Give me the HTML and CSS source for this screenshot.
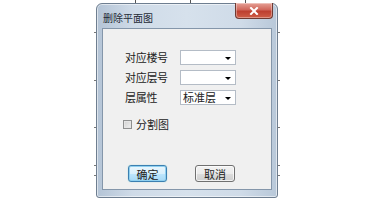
FILE: index.html
```html
<!DOCTYPE html>
<html lang="zh">
<head>
<meta charset="utf-8">
<title>删除平面图</title>
<link rel="stylesheet" href="styles.css">
</head>
<body>
<div class="stage">
  <div class="dialog">
    <div class="titlebar">
      <span class="title">删除平面图</span>
      <div class="close">
        <svg width="10" height="8" viewBox="0 0 10 8"><path d="M2 1 L8 7 M8 1 L2 7" stroke="#fff" stroke-width="2" stroke-linecap="square"/></svg>
      </div>
    </div>
    <div class="client">
      <div class="form">
        <span class="label">对应楼号</span>
        <div class="combo"><span class="value"></span><span class="arrow"></span></div>
        <span class="label">对应层号</span>
        <div class="combo"><span class="value"></span><span class="arrow"></span></div>
        <span class="label">层属性</span>
        <div class="combo"><span class="value">标准层</span><span class="arrow"></span></div>
      </div>
      <label class="check"><span class="box"></span><span>分割图</span></label>
      <div class="buttons">
        <button class="btn primary">确定</button>
        <button class="btn">取消</button>
      </div>
    </div>
  </div>
</div>
</body>
</html>
```
FILE: styles.css
```css
html, body {
  margin: 0;
  padding: 0;
  background: #ffffff;
}
body {
  width: 375px;
  height: 200px;
  overflow: hidden;
  font-family: "Noto Sans CJK SC", "Noto Sans", sans-serif;
  font-size: 11px;
  color: #222;
}
.stage {
  margin-left: 94px;
  width: 186px;
  height: 200px;
  box-sizing: border-box;
  padding: 3px 2px 2px 2px;
  background:
    linear-gradient(#555, #555) 41px 0 / 1px 4px no-repeat,
    linear-gradient(#555, #555) 96px 0 / 1px 4px no-repeat,
    linear-gradient(#555, #555) 151px 0 / 1px 4px no-repeat,
    linear-gradient(#777, #777) 0 32px / 186px 1px no-repeat,
    linear-gradient(#777, #777) 0 80px / 186px 1px no-repeat,
    linear-gradient(#777, #777) 0 127px / 186px 1px no-repeat,
    linear-gradient(#777, #777) 0 165px / 186px 1px no-repeat,
    linear-gradient(#777, #777) 0 175px / 186px 1px no-repeat,
    #fff;
}
.dialog {
  height: 195px;
  box-sizing: border-box;
  border: 1px solid #6e7e90;
  border-radius: 6px 6px 3px 3px;
  background: linear-gradient(90deg, #b4c4d6 0%, #cfdbe8 20%, #d6e1ec 50%, #cfdbe8 80%, #b8c8d9 100%);
  box-shadow: inset 0 0 0 1px rgba(255,255,255,0.55);
  display: flex;
  flex-direction: column;
  padding: 0 5px 7px 5px;
}
.titlebar {
  height: 24px;
  display: flex;
  align-items: flex-start;
  justify-content: space-between;
}
.title {
  font-size: 10px;
  color: #1e2a36;
  margin-top: 8px;
  padding-left: 1px;
  line-height: 12px;
}
.close {
  width: 38px;
  height: 16px;
  margin-top: -1px;
  margin-right: -1px;
  box-sizing: border-box;
  border: 1px solid #6f3a32;
  border-top: none;
  border-radius: 0 0 4px 4px;
  background: linear-gradient(#e6a196 0%, #d0665a 45%, #bd3f2f 55%, #cf5e47 100%);
  box-shadow: inset 0 0 0 1px rgba(255,255,255,0.35);
  display: flex;
  align-items: center;
  justify-content: center;
}
.client {
  flex: 1;
  box-sizing: border-box;
  border: 1px solid #8496aa;
  background: #f0f0f0;
  padding: 21px 0 0 22px;
  display: flex;
  flex-direction: column;
}
.form {
  display: grid;
  grid-template-columns: 55px 56px;
  grid-auto-rows: 15px;
  row-gap: 5px;
  align-items: center;
}
.label {
  line-height: 15px;
  letter-spacing: -0.3px;
}
.combo {
  height: 15px;
  box-sizing: border-box;
  border: 1px solid #b4bcc6;
  background: #fff;
  display: flex;
  align-items: center;
  justify-content: space-between;
  padding: 0 4px 0 2px;
}
.value {
  line-height: 13px;
}
.arrow {
  width: 0;
  height: 0;
  border-left: 3px solid transparent;
  border-right: 3px solid transparent;
  border-top: 3px solid #000;
  margin-top: 1px;
}
.check {
  margin-top: 14px;
  margin-left: -2px;
  display: flex;
  align-items: center;
  gap: 4px;
  height: 10px;
  line-height: 12px;
}
.box {
  width: 9px;
  height: 9px;
  box-sizing: border-box;
  border: 1px solid #8e8f8f;
  background: linear-gradient(135deg, #d0d0d0, #f0f0f0);
  box-shadow: inset 0 0 0 1px #e4e4e4;
}
.buttons {
  margin-top: 36px;
  margin-left: 3px;
  display: flex;
  gap: 28px;
}
.btn {
  width: 40px;
  height: 17px;
  box-sizing: border-box;
  padding: 0;
  font-family: "Noto Sans CJK SC", "Noto Sans", sans-serif;
  font-size: 11px;
  line-height: 14px;
  color: #222;
  border: 1px solid #707070;
  border-radius: 3px;
  background: linear-gradient(#f2f2f2 0%, #ebebeb 50%, #dddddd 51%, #cfcfcf 100%);
  box-shadow: inset 0 0 0 1px rgba(255,255,255,0.7);
}
.btn.primary {
  width: 39px;
  border-color: #3c7fb1;
  background: linear-gradient(#eaf6fd 0%, #d9f0fc 50%, #bee6fd 51%, #a7d9f5 100%);
  box-shadow: inset 0 0 0 1px #8fd0f0, 0 0 1px #6cc;
}
```
